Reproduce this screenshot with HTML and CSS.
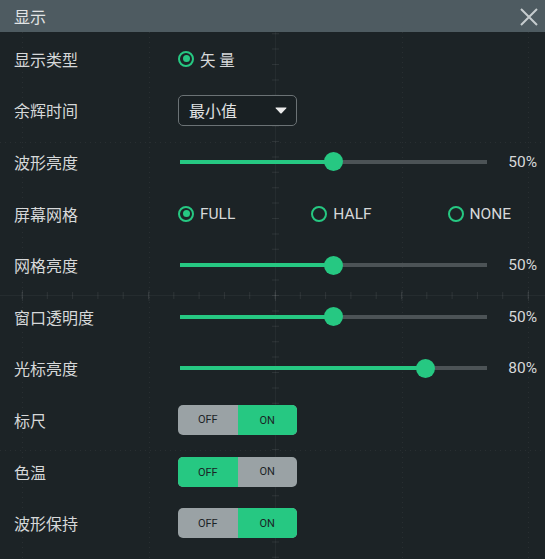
FILE: index.html
```html
<!DOCTYPE html>
<html lang="zh-CN">
<head>
  <meta charset="UTF-8">
  <meta name="viewport" content="width=device-width, initial-scale=1.0">
  <title>显示</title>
  <link rel="stylesheet" href="styles.css">
</head>
<body>
  <div class="panel">
    <div class="titlebar">
      <span class="title">显示</span>
      <svg class="close" width="18" height="18" viewBox="0 0 18 18">
        <path d="M1 1 L17 17 M17 1 L1 17" stroke="#c6ccce" stroke-width="2" fill="none"/>
      </svg>
    </div>

    <div class="content">
      <!-- 背景刻度网格 -->
      <svg class="graticule" width="545" height="527" viewBox="0 0 545 527">
        <g stroke="rgba(255,255,255,0.06)" stroke-width="1" stroke-dasharray="1 4">
          <line x1="0" y1="110.5" x2="545" y2="110.5"/>
          <line x1="0" y1="418.5" x2="545" y2="418.5"/>
          <line x1="22.5" y1="0" x2="22.5" y2="527"/>
          <line x1="149.5" y1="0" x2="149.5" y2="527"/>
          <line x1="402.5" y1="0" x2="402.5" y2="527"/>
          <line x1="528.5" y1="0" x2="528.5" y2="527"/>
        </g>
        <g stroke="rgba(255,255,255,0.045)" stroke-width="1">
          <line x1="0" y1="263.5" x2="545" y2="263.5"/>
          <line x1="275.5" y1="0" x2="275.5" y2="527"/>
        </g>
        <g stroke="rgba(255,255,255,0.08)">
          <line x1="-3.8" y1="263.5" x2="545" y2="263.5" stroke-width="7" stroke-dasharray="1 24.3"/>
          <line x1="22" y1="263.5" x2="545" y2="263.5" stroke-width="11" stroke-dasharray="1 125.5"/>
          <line x1="275.5" y1="1.2" x2="275.5" y2="527" stroke-width="7" stroke-dasharray="1 14.4"/>
        </g>
      </svg>

      <div class="row">
        <div class="label">显示类型</div>
        <div class="control">
          <label class="radio checked"><span class="dot"></span>矢 量</label>
        </div>
      </div>

      <div class="row">
        <div class="label">余辉时间</div>
        <div class="control">
          <div class="select">
            <span>最小值</span>
            <svg width="12" height="7" viewBox="0 0 12 7">
              <path d="M1 0.5 H11 Q12 0.5 11.3 1.3 L6.7 6.2 Q6 6.9 5.3 6.2 L0.7 1.3 Q0 0.5 1 0.5 Z" fill="#ebebeb"/>
            </svg>
          </div>
        </div>
      </div>

      <div class="row">
        <div class="label">波形亮度</div>
        <div class="control">
          <div class="slider"><div class="fill" style="width: 50%"></div><div class="knob" style="left: 50%"></div></div>
          <div class="value">50%</div>
        </div>
      </div>

      <div class="row">
        <div class="label">屏幕网格</div>
        <div class="control radios">
          <label class="radio checked"><span class="dot"></span>FULL</label>
          <label class="radio"><span class="dot"></span>HALF</label>
          <label class="radio"><span class="dot"></span>NONE</label>
        </div>
      </div>

      <div class="row">
        <div class="label">网格亮度</div>
        <div class="control">
          <div class="slider"><div class="fill" style="width: 50%"></div><div class="knob" style="left: 50%"></div></div>
          <div class="value">50%</div>
        </div>
      </div>

      <div class="row">
        <div class="label">窗口透明度</div>
        <div class="control">
          <div class="slider"><div class="fill" style="width: 50%"></div><div class="knob" style="left: 50%"></div></div>
          <div class="value">50%</div>
        </div>
      </div>

      <div class="row">
        <div class="label">光标亮度</div>
        <div class="control">
          <div class="slider"><div class="fill" style="width: 80%"></div><div class="knob" style="left: 80%"></div></div>
          <div class="value">80%</div>
        </div>
      </div>

      <div class="row">
        <div class="label">标尺</div>
        <div class="control">
          <div class="toggle"><span>OFF</span><span class="on">ON</span></div>
        </div>
      </div>

      <div class="row">
        <div class="label">色温</div>
        <div class="control">
          <div class="toggle"><span class="on">OFF</span><span>ON</span></div>
        </div>
      </div>

      <div class="row">
        <div class="label">波形保持</div>
        <div class="control">
          <div class="toggle"><span>OFF</span><span class="on">ON</span></div>
        </div>
      </div>
    </div>
  </div>
</body>
</html>
```

FILE: styles.css
```css
body {
  margin: 0;
  background-color: #1c2326;
  font-family: Roboto, "Noto Sans CJK SC", sans-serif;
  color: #d6d8d9;
}
.panel {
  width: 545px;
  height: 559px;
  overflow: hidden;
}
.titlebar {
  height: 32px;
  background-color: #4e5b61;
  display: flex;
  align-items: center;
  justify-content: space-between;
  padding: 0 7px 0 14px;
}
.title {
  font-size: 16px;
  color: #e2e4e5;
}
.close {
  display: block;
  margin-top: 1px;
}
.content {
  position: relative;
  padding-top: 1px;
}
.graticule {
  position: absolute;
  top: 0;
  left: 0;
}
.row {
  position: relative;
  height: 51.6px;
  display: flex;
  align-items: center;
  padding-left: 14px;
}
.label {
  width: 164px;
  font-size: 16px;
}
.control {
  flex: 1;
  display: flex;
  align-items: center;
  padding-right: 8px;
}
.radios {
  gap: 76px;
}
.radio {
  display: flex;
  align-items: center;
  gap: 6px;
  font-size: 15.5px;
}
.radio .dot {
  width: 16px;
  height: 16px;
  box-sizing: border-box;
  border: 2.3px solid #26c882;
  border-radius: 50%;
  display: flex;
  align-items: center;
  justify-content: center;
}
.radio.checked .dot::after {
  content: "";
  width: 7px;
  height: 7px;
  border-radius: 50%;
  background-color: #26c882;
}
.select {
  width: 119px;
  height: 31px;
  box-sizing: border-box;
  border: 1px solid #6b7275;
  border-radius: 5px;
  background-color: #192023;
  display: flex;
  align-items: center;
  justify-content: space-between;
  padding: 0 9px 0 10px;
  font-size: 16px;
  color: #e0e2e3;
}
.select svg {
  display: block;
  margin-top: 1px;
}
.slider {
  position: relative;
  width: 307px;
  height: 4px;
  margin-left: 2px;
  background-color: #4c5356;
}
.slider .fill {
  height: 100%;
  background-color: #26c882;
}
.slider .knob {
  position: absolute;
  top: 50%;
  width: 19px;
  height: 19px;
  margin: -9.5px 0 0 -9.5px;
  border-radius: 50%;
  background-color: #26c882;
}
.value {
  flex: 1;
  text-align: right;
  font-size: 15.5px;
}
.toggle {
  width: 119px;
  height: 30px;
  border-radius: 5px;
  overflow: hidden;
  display: flex;
  background-color: #9aa2a5;
}
.toggle span {
  flex: 1;
  display: flex;
  align-items: center;
  justify-content: center;
  font-size: 11px;
  color: #1b2325;
}
.toggle span.on {
  background-color: #26c882;
  padding-top: 1px;
}
```
